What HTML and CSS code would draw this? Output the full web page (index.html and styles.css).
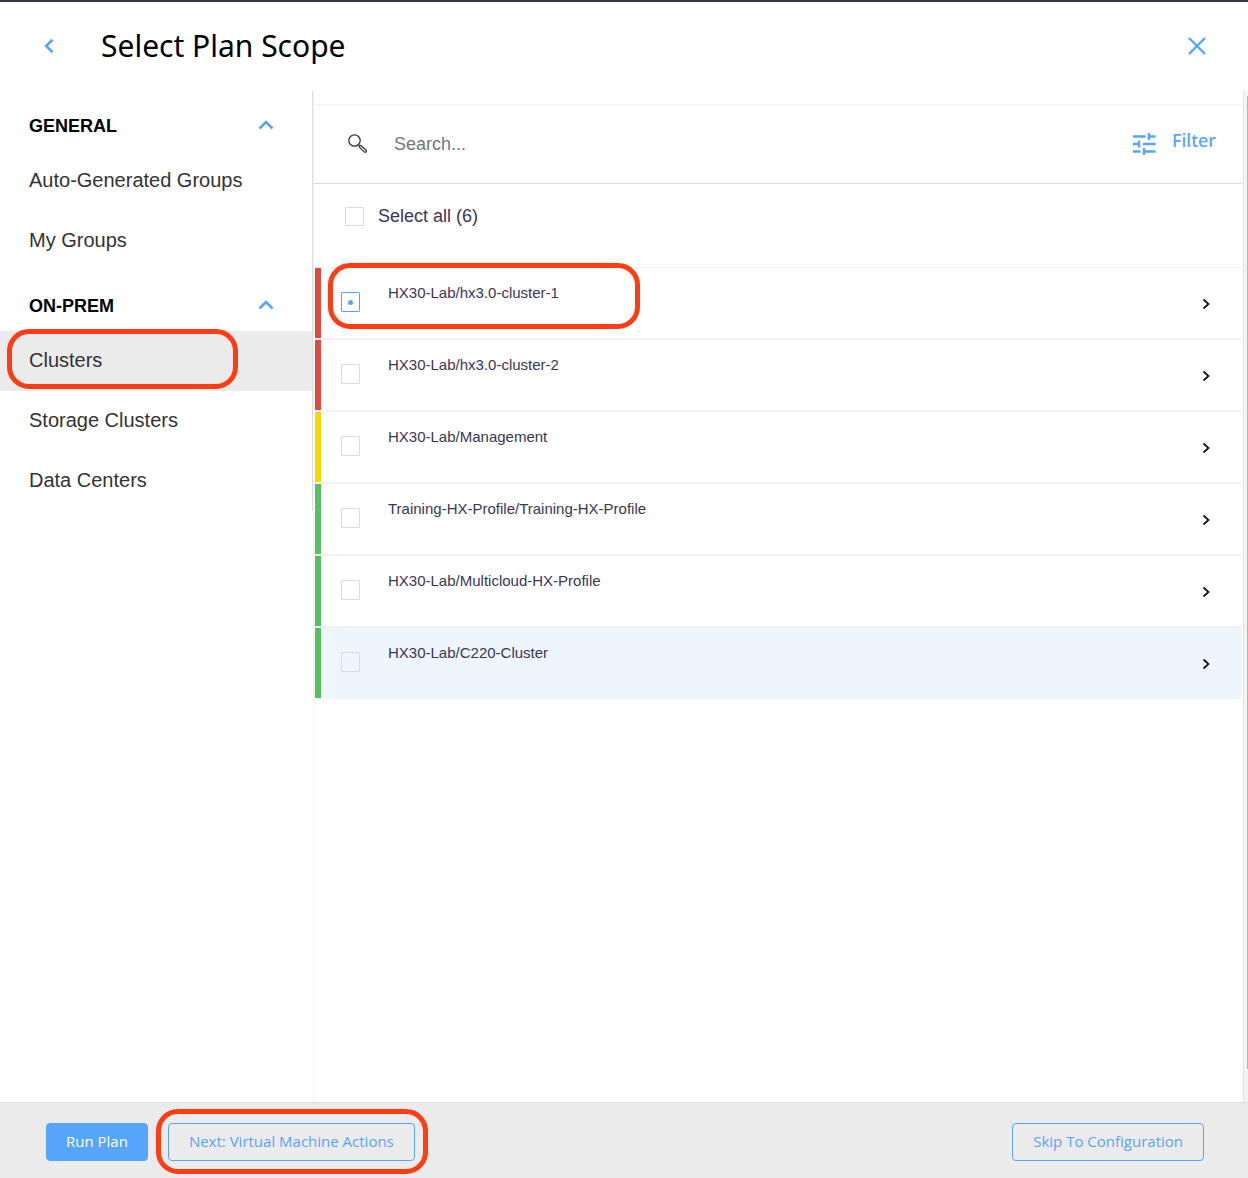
FILE: index.html
```html
<!DOCTYPE html>
<html lang="en">
<head>
<meta charset="utf-8">
<meta name="viewport" content="width=device-width, initial-scale=1">
<title>Select Plan Scope</title>
<link rel="stylesheet" href="styles.css">
</head>
<body>
<div class="page">
  <header class="header">
    <button class="icon-button" type="button" aria-label="Back">
      <svg width="10" height="16" viewBox="0 0 10 16"><path d="M8.5 1.8 2.2 8l6.3 6.2" fill="none" stroke="currentColor" stroke-width="2.6"/></svg>
    </button>
    <h1 class="title">Select Plan Scope</h1>
    <button class="icon-button close" type="button" aria-label="Close">
      <svg width="18" height="18" viewBox="0 0 18 18"><path d="M1 1l16 16M17 1 1 17" fill="none" stroke="currentColor" stroke-width="2.4"/></svg>
    </button>
  </header>

  <div class="body">
    <nav class="sidebar" aria-label="Scope">
      <div class="nav">
        <button class="group" type="button" aria-expanded="true">GENERAL
          <svg width="16" height="12" viewBox="0 0 16 12"><path d="M1.500 8.500 8 2l6.500 6.500" fill="none" stroke="currentColor" stroke-width="2.600"/></svg>
        </button>
        <a class="item" href="#auto">Auto-Generated Groups</a>
        <a class="item" href="#mine">My Groups</a>
        <button class="group" type="button" aria-expanded="true">ON-PREM
          <svg width="16" height="12" viewBox="0 0 16 12"><path d="M1.500 8.500 8 2l6.500 6.500" fill="none" stroke="currentColor" stroke-width="2.600"/></svg>
        </button>
        <a class="item active" href="#clusters" aria-current="page">Clusters<span class="ring ring-nav"></span></a>
        <a class="item" href="#storage">Storage Clusters</a>
        <a class="item" href="#data">Data Centers</a>
      </div>
    </nav>

    <main class="content">
      <div class="toolbar">
        <label class="search">
          <svg width="20" height="20" viewBox="0 0 20 20" fill="none" stroke="#333" stroke-width="1.3"><circle cx="6.500" cy="6.500" r="5.700"/><path d="M10.600 10.700l1.300 1.200M11.400 13.100c-.4-1 .6-1.900 1.500-1.500l5.300 4.700c.9 1-.7 2.700-1.700 1.800z"/></svg>
          <input class="search-input" type="text" placeholder="Search..." aria-label="Search">
        </label>
        <button class="filter" type="button">
          <svg width="24" height="24" viewBox="0 0 24 24" fill="none" stroke="currentColor" stroke-width="2.4"><path d="M1 4.500h12.500M17 1v7M17 4.500h6.500M1 12h6M7 8.500v7M11 12h12.500M1 19.500h7.500M12 16v7M12 19.500h11.500"/></svg>
          <span class="filter-text">Filter</span>
        </button>
      </div>

      <label class="select-all"><input class="check" type="checkbox">Select all (6)</label>

      <ul class="list">
        <li class="row red"><input class="check" type="checkbox" id="c1" checked><label class="name" for="c1">HX30-Lab/hx3.0-cluster-1</label><button class="open" type="button" aria-label="Open"><svg width="8" height="12" viewBox="0 0 8 12"><path d="M1.500 1.500 6.500 6l-5 4.500"/></svg></button><span class="ring ring-row"></span></li>
        <li class="row red"><input class="check" type="checkbox" id="c2"><label class="name" for="c2">HX30-Lab/hx3.0-cluster-2</label><button class="open" type="button" aria-label="Open"><svg width="8" height="12" viewBox="0 0 8 12"><path d="M1.500 1.500 6.500 6l-5 4.500"/></svg></button></li>
        <li class="row yellow"><input class="check" type="checkbox" id="c3"><label class="name" for="c3">HX30-Lab/Management</label><button class="open" type="button" aria-label="Open"><svg width="8" height="12" viewBox="0 0 8 12"><path d="M1.500 1.500 6.500 6l-5 4.500"/></svg></button></li>
        <li class="row green"><input class="check" type="checkbox" id="c4"><label class="name" for="c4">Training-HX-Profile/Training-HX-Profile</label><button class="open" type="button" aria-label="Open"><svg width="8" height="12" viewBox="0 0 8 12"><path d="M1.500 1.500 6.500 6l-5 4.500"/></svg></button></li>
        <li class="row green"><input class="check" type="checkbox" id="c5"><label class="name" for="c5">HX30-Lab/Multicloud-HX-Profile</label><button class="open" type="button" aria-label="Open"><svg width="8" height="12" viewBox="0 0 8 12"><path d="M1.500 1.500 6.500 6l-5 4.500"/></svg></button></li>
        <li class="row green highlighted"><input class="check" type="checkbox" id="c6"><label class="name" for="c6">HX30-Lab/C220-Cluster</label><button class="open" type="button" aria-label="Open"><svg width="8" height="12" viewBox="0 0 8 12"><path d="M1.500 1.500 6.500 6l-5 4.500"/></svg></button></li>
      </ul>
    </main>
    <div class="scrollbar"><div class="thumb"></div></div>
  </div>

  <footer class="footer">
    <button class="button primary" type="button">Run Plan</button>
    <button class="button next" type="button">Next: Virtual Machine Actions<span class="ring ring-next"></span></button>
    <button class="button skip" type="button">Skip To Configuration</button>
  </footer>
</div>
</body>
</html>
```
FILE: styles.css
```css
* { box-sizing: border-box; }

body {
  margin: 0;
  background: #fff;
  color: #3b3556;
  font-family: "Liberation Sans", Arial, sans-serif;
}

button {
  padding: 0;
  border: 0;
  background: none;
  font: inherit;
  cursor: pointer;
}

svg { display: block; flex: none; }

.page {
  display: flex;
  flex-direction: column;
  min-height: 100vh;
  border-top: 2px solid #3b3556;
}

.header {
  display: flex;
  align-items: center;
  height: 89px;
  padding: 0 42px 2px 44px;
}

.icon-button { color: #57a5fb; }
.close { margin-left: auto; }

.title {
  margin: 0 0 0 47px;
  color: #000;
  font: 400 30px/40px "Noto Sans", sans-serif;
}

.body { display: flex; flex: 1; }

.sidebar { width: 314px; flex: none; border-right: 1px solid #f3f3f7; }
.nav { padding-top: 5px; height: 420px; border-right: 1px solid #dedee2; }

.group {
  display: flex;
  align-items: center;
  justify-content: space-between;
  width: 100%;
  height: 60px;
  padding: 0 38px 0 29px;
  color: #000;
  font-weight: 700;
  font-size: 18px;
}
.group svg { color: #57a5fb; }

.item {
  position: relative;
  display: flex;
  align-items: center;
  height: 60px;
  padding: 0 0 2px 29px;
  color: #333;
  font-size: 20px;
  text-decoration: none;
}
.group + .item { margin-top: -5px; }
.item + .group { margin-top: 5px; }
.active { background: #ebebeb; }

.ring {
  position: absolute;
  border: 5px solid #ff3c14;
  border-radius: 22px;
  pointer-events: none;
}
.ring-nav { left: 7px; top: -2px; width: 231px; height: 60px; }
.ring-row { left: 13px; top: -5px; width: 312px; height: 66px; }
.ring-next { inset: -15px -14px -14px -13px; }

.content { flex: 1; min-width: 0; padding: 13px 1px 0 0; }

.toolbar {
  display: flex;
  align-items: center;
  height: 80px;
  padding: 0 25px 0 34px;
  border-top: 1px solid #f1f1f7;
  border-bottom: 1px solid #d8d8e5;
}

.search { display: flex; flex: 1; align-items: center; gap: 26px; }
.search-input {
  flex: 1;
  min-width: 0;
  padding: 0;
  border: 0;
  outline: 0;
  background: none;
  color: #3b3556;
  font: 18px/24px "Liberation Sans", Arial, sans-serif;
}
.search-input::placeholder { color: #74767f; opacity: 1; }

.filter {
  display: flex;
  align-items: flex-end;
  gap: 16px;
  padding: 0 1px 5px 0;
  color: #57a5fb;
  font: 500 18px/24px "Noto Sans", sans-serif;
}
.filter-text { padding-bottom: 4px; }

.check {
  appearance: none;
  display: grid;
  place-content: center;
  flex: none;
  width: 19px;
  height: 19px;
  margin: 0;
  border: 1px solid #dadae6;
  border-radius: 1px;
}
.check:checked { border-color: #57a5fb; }
.check:checked::before {
  content: "";
  width: 5px;
  height: 5px;
  border-radius: 50%;
  background: #57a5fb;
}

.select-all {
  display: flex;
  align-items: center;
  gap: 14px;
  height: 64px;
  padding-left: 31px;
  font-size: 18px;
}

.list {
  margin: 19px 0 0 1px;
  padding: 0;
  border-top: 1px solid #f1f1f7;
  list-style: none;
}

.row {
  position: relative;
  display: flex;
  align-items: flex-start;
  height: 72px;
  padding-right: 32px;
  border-bottom: 2px solid #f1f1f7;
}
.row::before { content: ""; width: 6px; height: 70px; background: var(--status); }
.row .check { height: 20px; margin: 24px 28px 0 20px; }
.row:last-child { border-bottom: 1px solid #f1f1f7; height: 71px; border-radius: 0 0 4px 4px; }
.red { --status: #e3483f; }
.yellow { --status: #f4d800; }
.green { --status: #54c15c; }
.highlighted { background: #eef5fd; }

.name { flex: 1; padding-top: 16px; font-size: 15px; line-height: 18px; }

.open { margin-top: 30px; }
.open path { fill: none; stroke: #111; stroke-width: 1.7; }

.scrollbar {
  display: flex;
  justify-content: flex-end;
  width: 5px;
  padding: 5px 0 33px;
  border-left: 1px solid #e2e2e2;
  background: #f3f3f3;
}
.thumb { width: 1px; background: #b5b5b5; }

.footer {
  display: flex;
  align-items: center;
  gap: 20px;
  height: 76px;
  padding: 2px 44px 0 46px;
  border-top: 1px solid #dfdfdf;
  background: #ebebeb;
}

.button {
  position: relative;
  height: 38px;
  padding: 0 20px 2px;
  border: 1px solid #57a5fb;
  border-radius: 4px;
  color: #57a5fb;
  font: 400 15px/20px "Open Sans", sans-serif;
}
.primary { padding: 0 19px 2px; background: #57a5fb; color: #fff; }
.skip { margin-left: auto; }
```
